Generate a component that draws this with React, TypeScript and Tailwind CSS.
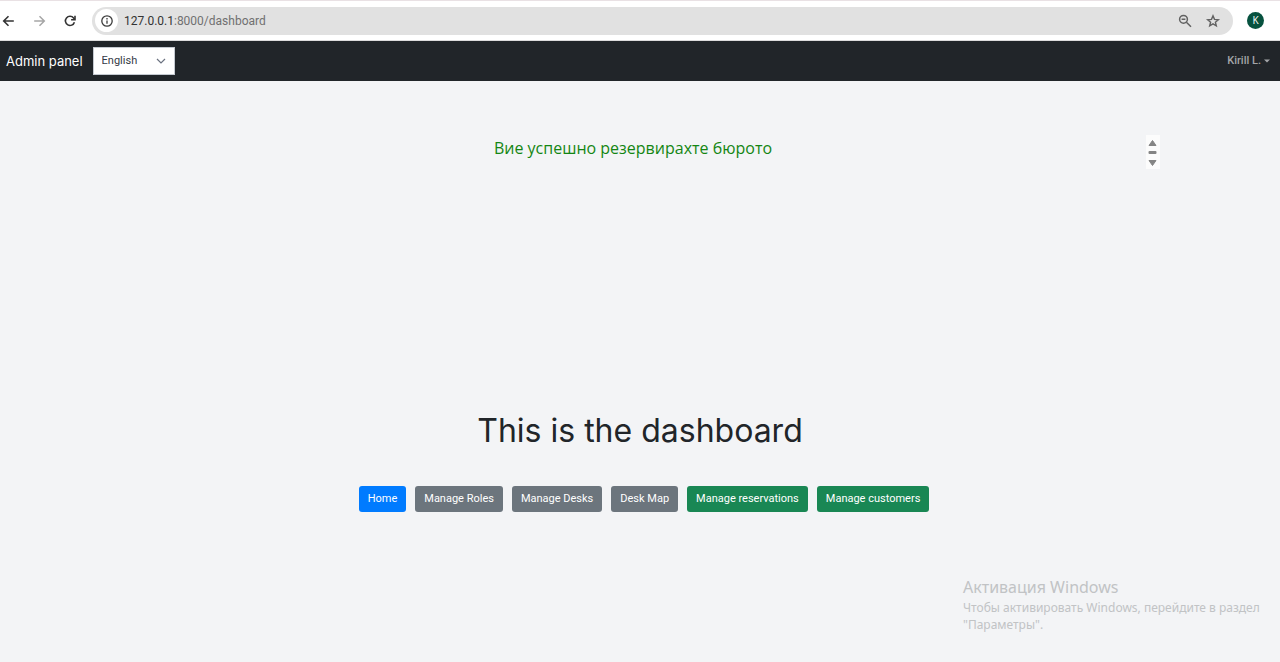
import type { ReactNode } from "react";

function IconButton({ label, className, children }: { label: string; className?: string; children: ReactNode }) {
  return (
    <button type="button" aria-label={label} className={`flex size-4 shrink-0 items-center justify-center ${className ?? ""}`}>
      {children}
    </button>
  );
}

function BrowserBar() {
  return (
    <div className="flex h-[41px] items-center border-t border-b border-t-[#e9e1e4] border-b-[#dcdcdc] bg-white font-['Open_Sans','Noto_Sans',sans-serif] text-[#3c3c3c]">
      <div className="flex w-23 shrink-0 items-center gap-[15px]">
        <IconButton label="Back" className="text-[#333333]">
          <svg viewBox="0 0 16 16" className="size-4" fill="none" stroke="currentColor" strokeWidth="1.6">
            <path d="M13.8 8H3.8M8.5 3.2 3.7 8l4.8 4.8" />
          </svg>
        </IconButton>
        <IconButton label="Forward" className="text-[#a6a6a6]">
          <svg viewBox="0 0 16 16" className="size-4" fill="none" stroke="currentColor" strokeWidth="1.5">
            <path d="M3.2 8h10M8.5 3.2 13.3 8l-4.8 4.8" />
          </svg>
        </IconButton>
        <IconButton label="Reload" className="text-[#333333]">
          <svg viewBox="0 0 16 16" className="size-4" fill="none" stroke="currentColor" strokeWidth="1.6">
            <path d="M12.4 9.2A4.6 4.6 0 1 1 11.6 5l1 1.2" />
            <path d="M13 2.8v3.9H9.1" />
          </svg>
        </IconButton>
      </div>
      <div className="flex h-7 min-w-0 flex-1 items-center rounded-full bg-[#e1e1e1] pr-3 pl-[3px]">
        <button type="button" aria-label="Site information" className="flex size-[23px] shrink-0 items-center justify-center rounded-full bg-white">
          <svg viewBox="0 0 14 14" className="size-3.5" fill="none" stroke="currentColor" strokeWidth="1.3">
            <circle cx="7" cy="7" r="5.2" />
            <path d="M7 6.4v3.4M7 4v1.4" />
          </svg>
        </button>
        <div className="ml-[6px] flex-1 font-['Roboto',sans-serif] text-[12px] text-[#707070]">
          <span className="text-[#333333]">127.0.0.1</span>:8000/dashboard
        </div>
        <div className="flex items-center gap-3 text-[#626262]">
          <IconButton label="Zoom">
            <svg viewBox="0 0 16 16" className="size-4" fill="none" stroke="currentColor" strokeWidth="1.5">
              <circle cx="6.5" cy="6.3" r="3.9" />
              <path d="m9.4 9.2 4.6 4.6M4.6 6.3h3.8" />
            </svg>
          </IconButton>
          <IconButton label="Bookmark">
            <svg viewBox="0 0 16 16" className="size-4" fill="none" stroke="currentColor" strokeWidth="1.4">
              <path d="m8 2.9 1.5 3.5 3.8.3-2.9 2.5.9 3.7L8 10.9l-3.3 2 .9-3.7-2.9-2.5 3.8-.3z" />
            </svg>
          </IconButton>
        </div>
      </div>
      <button type="button" aria-label="Profile" className="mr-4 ml-[14px] flex size-[17px] shrink-0 items-center justify-center rounded-full bg-[#07523f] text-[10px] text-white">
        K
      </button>
    </div>
  );
}

function NavBar() {
  return (
    <header className="flex h-10 items-center bg-[#212529] px-[6px]">
      <a href="#" className="pt-px text-[13px] text-white">Admin panel</a>
      <div className="relative ml-[10px]">
        <select aria-label="Language" defaultValue="en" className="block h-7 w-[82px] appearance-none border border-[#c5cad1] bg-white pr-6 pl-2 font-['Roboto',sans-serif] text-[11px] text-[#343a46]">
          <option value="en">English</option>
          <option value="bg">Български</option>
        </select>
        <svg viewBox="0 0 12 12" aria-hidden="true" className="pointer-events-none absolute top-2 right-2 size-3" fill="none" stroke="#6b7280" strokeWidth="1.2">
          <path d="m2 4 4 4 4-4" />
        </svg>
      </div>
      <button type="button" className="mr-1 ml-auto flex items-center gap-[3px] font-['Roboto',sans-serif] text-[11px] font-medium text-[#a3a5a8]">
        Kirill L.
        <svg viewBox="0 0 6 4" aria-hidden="true" className="h-1 w-1.5" fill="currentColor">
          <path d="M0 .5h6L3 3.5z" />
        </svg>
      </button>
    </header>
  );
}

const actions = [
  { label: "Home", color: "bg-[#007bff]" },
  { label: "Manage Roles", color: "bg-[#6c757d]" },
  { label: "Manage Desks", color: "bg-[#6c757d]" },
  { label: "Desk Map", color: "bg-[#6c757d]" },
  { label: "Manage reservations", color: "bg-[#198754]" },
  { label: "Manage customers", color: "bg-[#198754]" },
];

export default function App() {
  return (
    <div className="flex min-h-screen flex-col bg-[#f3f4f6] font-['Inter',sans-serif] text-[#212529]">
      <BrowserBar />
      <NavBar />
      <main>
        <div className="mx-30 mt-[54px] flex h-[34px] items-start">
          <p role="status" className="flex-1 text-center font-['Open_Sans','Noto_Sans',sans-serif] text-[16px] leading-[26px] text-[#138613]">
            Вие успешно резервирахте бюрото
          </p>
          <svg viewBox="0 0 14 34" aria-hidden="true" className="h-[34px] w-3.5" fill="#858585" stroke="#858585" strokeLinejoin="round">
            <path fill="#fcfcfc" stroke="none" d="M0 0h14v34H0z" />
            <path d="m6.500 5.500 3.500 5h-7z" />
            <path d="M3 25.500h7l-3.500 5z" />
            <rect x="2.500" y="16" width="8" height="3" rx="1" stroke="none" />
          </svg>
        </div>
        <h1 className="mt-[241px] text-center text-[32px] leading-[42px]">This is the dashboard</h1>
        <div className="mt-[34px] flex flex-wrap justify-center gap-[9px] pl-2">
          {actions.map((action) => (
            <a key={action.label} href="#" className={`rounded-[3px] px-[9px] font-['Roboto',sans-serif] text-[11px] leading-[26px] text-white ${action.color}`}>
              {action.label}
            </a>
          ))}
        </div>
      </main>
      <aside className="mt-16 ml-auto w-[317px] pr-4 font-['Noto_Sans',sans-serif] text-[12px] leading-[17px] text-[#c1c3c5]">
        <h2 className="text-[16px] leading-[23px]">Активация Windows</h2>
        <p>Чтобы активировать Windows, перейдите в раздел "Параметры".</p>
      </aside>
    </div>
  );
}
